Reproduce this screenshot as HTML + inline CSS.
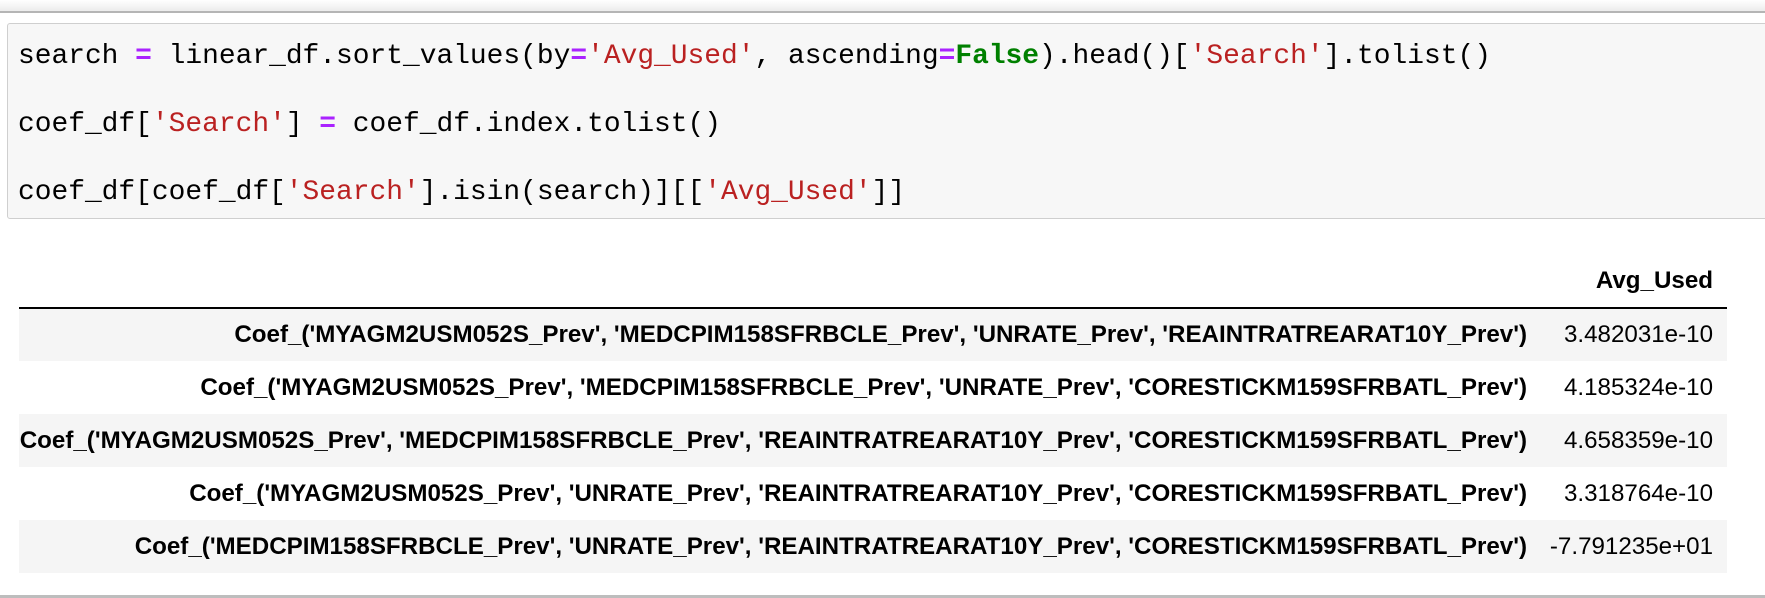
<!DOCTYPE html>
<html><head><style>
body{margin:0;width:1765px;height:598px;background:#fff;position:relative;overflow:hidden;font-family:"Liberation Sans",Arial,sans-serif}
.top{position:absolute;left:0;top:0;width:1765px;height:11px;background:linear-gradient(#fff,#ececec)}
.topline{position:absolute;left:0;top:11px;width:1765px;height:2px;background:#b5b5b5}
.code{position:absolute;left:7px;top:23px;width:1770px;height:196px;background:#f7f7f7;border:1px solid #cfcfcf;border-radius:3px;box-sizing:border-box}
.code pre{margin:0;position:absolute;left:10px;top:-1px;font-family:"Liberation Mono",monospace;font-size:27.9px;line-height:68px;color:#000}
.o{color:#aa22ff;font-weight:bold}.s{color:#ba2121}.k{color:#008000;font-weight:bold}
table{position:absolute;left:19px;top:254px;border-collapse:collapse;font-size:24.15px;width:1708px}
th,td{text-align:right;height:53px;padding:0 14px 0 0;white-space:nowrap;box-sizing:border-box}
thead th{height:54px;border-bottom:2px solid #000;vertical-align:middle}
tbody th{font-weight:bold}
tbody tr:nth-child(odd){background:#f5f5f5}
td{width:186px}
.bot{position:absolute;left:0;top:595px;width:1765px;height:3px;background:#bdbdbd}
</style></head><body>
<div class="top"></div><div class="topline"></div>
<div class="code"><pre>search <span class="o">=</span> linear_df.sort_values(by<span class="o">=</span><span class="s">'Avg_Used'</span>, ascending<span class="o">=</span><span class="k">False</span>).head()[<span class="s">'Search'</span>].tolist()
coef_df[<span class="s">'Search'</span>] <span class="o">=</span> coef_df.index.tolist()
coef_df[coef_df[<span class="s">'Search'</span>].isin(search)][[<span class="s">'Avg_Used'</span>]]</pre></div>
<table>
<thead><tr><th></th><th>Avg_Used</th></tr></thead>
<tbody>
<tr><th>Coef_('MYAGM2USM052S_Prev', 'MEDCPIM158SFRBCLE_Prev', 'UNRATE_Prev', 'REAINTRATREARAT10Y_Prev')</th><td>3.482031e-10</td></tr>
<tr><th>Coef_('MYAGM2USM052S_Prev', 'MEDCPIM158SFRBCLE_Prev', 'UNRATE_Prev', 'CORESTICKM159SFRBATL_Prev')</th><td>4.185324e-10</td></tr>
<tr><th>Coef_('MYAGM2USM052S_Prev', 'MEDCPIM158SFRBCLE_Prev', 'REAINTRATREARAT10Y_Prev', 'CORESTICKM159SFRBATL_Prev')</th><td>4.658359e-10</td></tr>
<tr><th>Coef_('MYAGM2USM052S_Prev', 'UNRATE_Prev', 'REAINTRATREARAT10Y_Prev', 'CORESTICKM159SFRBATL_Prev')</th><td>3.318764e-10</td></tr>
<tr><th>Coef_('MEDCPIM158SFRBCLE_Prev', 'UNRATE_Prev', 'REAINTRATREARAT10Y_Prev', 'CORESTICKM159SFRBATL_Prev')</th><td>-7.791235e+01</td></tr>
</tbody></table>
<div class="bot"></div>
</body></html>
